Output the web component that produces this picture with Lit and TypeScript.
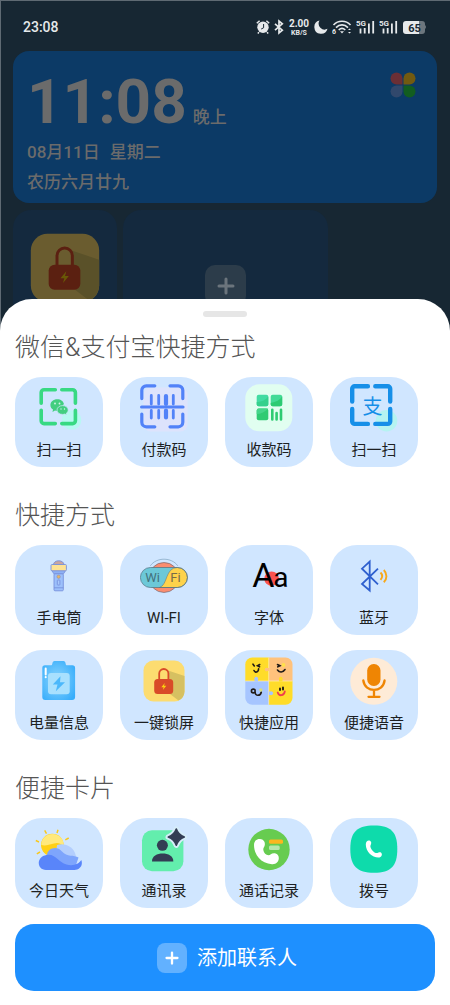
import { LitElement, html, svg, css, type SVGTemplateResult } from "lit";
import { customElement } from "lit/decorators.js";

const lock = svg`
  <rect x="3.5" y="3.5" width="41" height="41" rx="10" fill="#fcdc70"/>
  <path d="M28 13.5 44.5 19V34.5A10 10 0 0 1 38.5 43.5L30 37Z" fill="#d6c061"/>
  <path d="M19.2 23V16.6A4.6 4.6 0 0 1 28.4 16.6V23" fill="none" stroke="#d94b28" stroke-width="1.8"/>
  <rect x="14.2" y="22" width="19" height="15" rx="3.5" fill="#d94b28"/>
  <path d="M24.8 26 21.3 30.2H23.6L22.8 33 26.3 28.8H24Z" fill="#fbd20f"/>`;

const icons: Record<string, SVGTemplateResult> = {
  lock,
  wechat: svg`
    <circle cx="36.5" cy="36" r="9.8" fill="#b8f8f2"/>
    <g fill="none" stroke="#38d983" stroke-width="3.6" stroke-linecap="round">
      <path d="M20.3 5.8H9A2.8 2.8 0 0 0 6.2 8.6V19.2M26.8 5.8H37.6A2.8 2.8 0 0 1 40.4 8.6V19.2M20.3 39.6H9A2.8 2.8 0 0 1 6.2 36.8V26.2M26.8 39.6H37.6A2.8 2.8 0 0 0 40.4 36.8V26.2"/>
    </g>
    <path d="M22.3 15.2C18.3 15.2 15.4 17.8 15.4 21C15.4 23 16.4 24.6 18 25.6L17.5 28 20 26.6C21.4 27 22.6 26.9 23.6 26.7L28.9 20C28.5 17.3 25.8 15.2 22.3 15.2Z" fill="#43ce80"/>
    <path d="M27.6 21.6C24.4 21.6 22 23.5 22 26C22 28.6 24.4 30.4 27.6 30.4C28.4 30.4 29.2 30.3 29.9 30L31.8 31.1 31.4 29.2C32.6 28.4 33.2 27.3 33.2 26C33.2 23.5 30.7 21.6 27.6 21.6Z" fill="#43ce80" stroke="#d0e6ff" stroke-width=".7"/>
    <g fill="#d6f5ea"><circle cx="20" cy="19.5" r=".9"/><circle cx="24.5" cy="19.5" r=".9"/><circle cx="26" cy="25" r=".7"/><circle cx="29.5" cy="25" r=".7"/></g>`,
  paycode: svg`
    <rect x="3.5" y="3.5" width="44" height="44" rx="7" fill="#dde3fc"/>
    <g fill="none" stroke="#5282f8" stroke-width="3.2" stroke-linecap="round">
      <path d="M14.8 1.8H6.3A4.5 4.5 0 0 0 1.8 6.3V14.6M30 1.8H38.3A4.5 4.5 0 0 1 42.8 6.3V14.6M14.8 42.8H6.3A4.5 4.5 0 0 1 1.8 38.3V30M30 42.8H38.3A4.5 4.5 0 0 0 42.8 38.3V30M1.6 23H43"/>
      <path d="M11.3 11.5V20M18.7 11.5V20M33.3 11.5V20M11.3 26.5V34M18.7 26.5V34M33.3 26.5V34" stroke-width="2.8"/>
      <path d="M26 12V20M26 26.5V33.5" stroke-width="4.2"/>
    </g>`,
  receive: svg`
    <rect x=".3" y=".3" width="47" height="47" rx="14" fill="#e1fef0"/>
    <rect x="11.7" y="10.8" width="11.6" height="11.5" rx="2" fill="#42dba2"/>
    <path d="M11.7 18C17 18 21 15.5 23.3 12.5V20.3A2 2 0 0 1 21.3 22.3H13.7A2 2 0 0 1 11.7 20.3Z" fill="#35d08c"/>
    <rect x="25.7" y="10.8" width="11.5" height="11.5" rx="2" fill="#43da96"/>
    <path d="M25.7 19C31 18 35 16 37.2 12.5V20.3A2 2 0 0 1 35.2 22.3H27.7A2 2 0 0 1 25.7 20.3Z" fill="#2ccb72"/>
    <rect x="11.7" y="24.5" width="11.6" height="11.7" rx="2" fill="#2fcb72"/>
    <path d="M11.7 26.5A2 2 0 0 1 13.7 24.5H23.3C20 28 16 30 11.7 30Z" fill="#45d58a"/>
    <path d="M27.3 25.7V35.5M31.6 29V35.5M36 25.7V35.5" stroke="#2fcb72" stroke-width="2.6" stroke-linecap="round"/>`,
  alipay: svg`
    <circle cx="36.5" cy="36.7" r="10.8" fill="#b5f3f1"/>
    <g fill="none" stroke="#168fe8" stroke-width="4.4" stroke-linecap="round">
      <path d="M17.9 2.2H4.7A2.5 2.5 0 0 0 2.2 4.7V17.5M25.3 2.2H37.7A2.5 2.5 0 0 1 40.2 4.7V17.5M17.9 39.9H4.7A2.5 2.5 0 0 1 2.2 37.4V25M25.3 39.9H37.7A2.5 2.5 0 0 0 40.2 37.4V25"/>
    </g>
    <text x="22.5" y="29.5" class="glyph cjk" font-size="20" fill="#168fe8">支</text>`,
  torch: svg`
    <g stroke="#7791dc" stroke-width=".9" stroke-linejoin="round">
      <path d="M18.5 12.5A5 3.6 0 0 1 28.9 12.5Z" fill="#c9a5a0"/>
      <path d="M16.8 18.5H30.6L28.5 21.8H18.9Z" fill="#8db1f5"/>
      <rect x="19" y="21.8" width="9.3" height="17" rx="1" fill="#9cc0fb"/>
      <rect x="16" y="12.5" width="15.4" height="6.3" rx="1" fill="#fde294"/>
      <rect x="22.3" y="28" width="2.6" height="5" rx=".6" fill="#a9c9fd"/>
      <path d="M19 35.8H28.3"/>
    </g>
    <circle cx="23.6" cy="24.7" r="1.7" fill="#e6b768" stroke="#8a86a8" stroke-width=".5"/>`,
  wifi: svg`
    <path d="M10.3 13.8C16.5 5 31.5 5 37.8 13.8" fill="none" stroke="#7298b5" stroke-width=".6"/>
    <circle cx="24" cy="25.5" r="15" fill="#fa8d70" stroke="#665d68" stroke-width=".6"/>
    <rect x=".4" y="15.5" width="47" height="20" rx="10" fill="#6cc8d8"/>
    <path d="M37.5 15.5A10 10 0 0 1 37.5 35.5H19.5C28 33 25 15.5 37.5 15.5Z" fill="#fed24b" stroke="#5e6c77" stroke-width=".5"/>
    <rect x=".4" y="15.5" width="47" height="20" rx="10" fill="none" stroke="#51707e" stroke-width=".7"/>
    <text x="12.5" y="30" class="glyph" font-size="13" fill="#43727d">Wi</text>
    <text x="35.5" y="30" class="glyph" font-size="13" fill="#776b49">Fi</text>`,
  font: svg`
    <circle cx="26.6" cy="26.7" r="7.3" fill="#fb5350"/>
    <text x="18.3" y="34.5" class="glyph" font-size="34">A</text>
    <text x="35.8" y="34.5" class="glyph" font-size="28">a</text>`,
  bluetooth: svg`
    <path d="M28 16.7 12 32 19.7 38.5V9.5L12 16.7 28 32.3" fill="none" stroke="#2f60cf" stroke-width="1.8"/>
    <path d="M30.5 20.5C32.5 22.5 32.5 25.5 30.5 27.8M33.8 18C37.3 21.5 37.3 27 33.8 30.3" fill="none" stroke="#f7a81b" stroke-width="1.9"/>`,
  battery: svg`
    <defs><radialGradient id="cell" cx=".45" cy=".5" r=".65"><stop offset="0" stop-color="#8ed6fd"/><stop offset="1" stop-color="#37adfb"/></radialGradient></defs>
    <path d="M10 8.3H16.5C17.5 8.3 17 4 19.5 4H28.5C31 4 30.5 8.3 31.5 8.3H37.3A2.8 2.8 0 0 1 40.1 11.1V40A3 3 0 0 1 37.1 43H10.3A3 3 0 0 1 7.3 40V11A2.7 2.7 0 0 1 10 8.3Z" fill="url(#cell)"/>
    <rect x="13" y="16" width="21.7" height="21.3" rx="3" fill="#a8e0fe"/>
    <path d="M25.5 19.3 17.8 27.5H22.5L20.8 34.3 30 25.3H25Z" fill="#4bb8fb"/>
    <path d="M10.7 11.5V17.5M10.7 20V20.3" stroke="#fff" stroke-width="2" stroke-linecap="round"/>`,
  puzzle: svg`
    <clipPath id="board"><rect x=".3" y=".5" width="47.2" height="47.2" rx="7"/></clipPath>
    <g clip-path="url(#board)">
      <path d="M0 0H24V24H0ZM24 24H48V48H24Z" fill="#ffdc29"/>
      <path d="M24 0H48V24H24Z" fill="#ffc27c"/>
      <path d="M0 24H24V48H0Z" fill="#a6c5ff"/>
      <path d="M0 24H48M23.7 0V48" stroke="#fdeebc" stroke-width=".7"/>
      <path d="M24 11H22.5A1.8 1.8 0 1 0 22.5 14H24Z" fill="#ffc27c"/>
      <path d="M9.5 24.5V22.5A1.9 1.9 0 1 1 13 22.5V24.5Z" fill="#a6c5ff"/>
      <path d="M24 34.5H25.5A1.9 1.9 0 1 1 25.5 38H24Z" fill="#a6c5ff"/>
      <path d="M34 24.5V22.5A1.9 1.9 0 1 1 37.5 22.5V24.5Z" fill="#ffdc29"/>
    </g>
    <g fill="none" stroke="#211b17" stroke-width="1.6" stroke-linecap="round">
      <path d="M8 7.2 9.3 9M14.7 7.5 12.5 8.7 14.5 9.8M9 13.5C10 16 13.5 15.5 13.6 11.8"/>
      <path d="M32.5 7.5 35 8.8 32.8 9.8M32.5 13C34.5 15.8 38 15.5 40 12.5"/>
      <circle cx="8.3" cy="34" r="1.9"/><path d="M10.2 35.5C10 39 15.5 39.5 16.3 35"/>
      <path d="M35 31.5V33M38 30.5V32.5" stroke-width="1.9"/>
    </g>
    <circle cx="38.5" cy="8" r="1.9" fill="#ffe14a"/><circle cx="15.8" cy="33" r="1.7" fill="#d6dc86"/>
    <path d="M32.7 35.5C34 39.5 39 39 39.8 34.5" fill="none" stroke="#ef3f4d" stroke-width="1.8" stroke-linecap="round"/>`,
  mic: svg`
    <circle cx="23.8" cy="24.3" r="23.5" fill="#feebd7"/>
    <rect x="17.2" y="7" width="13.3" height="22" rx="6.5" fill="#ef8503"/>
    <path d="M13.3 23.5C15 36 33 36 34.6 23.5M24 33V39.5M18.5 39.8H29.5" fill="none" stroke="#ef8503" stroke-width="2.3" stroke-linecap="round"/>`,
  weather: svg`
    <path d="M9.7 5.3 11.5 8.7M23 4.8 22 8M33.7 13 30.3 14.8M.8 15.5 4 17M1.8 28.8 5 27" stroke="#f8c81e" stroke-width="1.5"/>
    <circle cx="17.3" cy="20" r="11.3" fill="#ffd016"/>
    <path d="M6.3 20C6 12 15 6.5 22.5 10.2C28 12.5 29 17.5 28.5 21C21 13.5 15 22.5 6.3 20Z" fill="#ffe97c"/>
    <path d="M22 20C30 17.5 39 22 40.8 30.5L41 37H20Z" fill="#b3cefd"/>
    <path d="M12 29.8C12.5 23 22 20 27 26.5C32 32.5 39 29.5 43.5 32.5L40 43H15Z" fill="#7ea5fc"/>
    <path d="M11.5 30C20 28 23 37 31.5 39.5C38 41.5 44 39 46.3 35C48.5 41 44 45 39.5 45H11C1.5 45 1 31.5 11.5 30Z" fill="#5985fa"/>`,
  contacts: svg`
    <rect x="2" y="5.2" width="41.4" height="41" rx="10" fill="#63eead"/>
    <g stroke-linejoin="round">
      <path id="star" d="M36.3 4C37.8 8.3 40 10.5 44.3 12C40 13.7 37.8 15.8 36.3 20.2C34.8 15.8 32.6 13.7 28.3 12C32.6 10.5 34.8 8.3 36.3 4Z" fill="#d6edf9" stroke="#d6edf9" stroke-width="5.5"/>
      <path d="M36.3 4C37.8 8.3 40 10.5 44.3 12C40 13.7 37.8 15.8 36.3 20.2C34.8 15.8 32.6 13.7 28.3 12C32.6 10.5 34.8 8.3 36.3 4Z" fill="#333d54" stroke="#333d54" stroke-width="1.6"/>
    </g>
    <circle cx="22.4" cy="20.3" r="5.5" fill="#333d54"/>
    <path d="M12 36.4C11.5 26 33.8 26 33.3 36.4Z" fill="#333d54"/>`,
  calls: svg`
    <circle cx="24" cy="24.5" r="20.7" fill="#67cc50"/>
    <path d="M9 20C9 16 11.5 13.8 15 14C18.5 14.2 20.3 17 19.8 20C19.4 22.5 18 22.8 18.3 25C18.7 28 21 30 23.5 30.3C25.3 30.4 26 28.3 29 28.3C32 28.3 34 30.5 33.8 33.5C33.5 37 31 39.5 27 39.2C16 38.5 9 30 9 20Z" fill="#fff"/>
    <rect x="24" y="14.4" width="14" height="4.3" rx="1.5" fill="#fcb71e"/>
    <rect x="24" y="20.5" width="10.7" height="4.5" rx="1.5" fill="#b7e7aa"/>`,
  dial: svg`
    <path d="M24 .5C41 .5 47.3 7 47.3 24S41 47.8 24 47.8S.3 41 .3 24S7 .5 24 .5Z" fill="#0edbab"/>
    <path d="M15.8 19.5C15.8 16.5 18 14.8 20 15.8C21.8 16.9 21.4 18.8 20.5 20.4C19.6 22.5 23.5 27.5 26 28C27.8 28.2 29.5 26.5 31.2 27.7C32.8 29.3 31.5 32.5 28.5 32.5C22 32.5 15.8 26.5 15.8 19.5Z" fill="#fff"/>`,
};

const icon = (name: string) =>
  html`<svg class="icon" viewBox="0 0 48 48" aria-hidden="true">${icons[name]}</svg>`;

interface Section {
  title: string;
  items: [string, string][];
}

const sections: Section[] = [
  {
    title: "微信&支付宝快捷方式",
    items: [["wechat", "扫一扫"], ["paycode", "付款码"], ["receive", "收款码"], ["alipay", "扫一扫"]],
  },
  {
    title: "快捷方式",
    items: [
      ["torch", "手电筒"], ["wifi", "WI-FI"], ["font", "字体"], ["bluetooth", "蓝牙"],
      ["battery", "电量信息"], ["lock", "一键锁屏"], ["puzzle", "快捷应用"], ["mic", "便捷语音"],
    ],
  },
  {
    title: "便捷卡片",
    items: [["weather", "今日天气"], ["contacts", "通讯录"], ["calls", "通话记录"], ["dial", "拨号"]],
  },
];

@customElement("status-bar")
class StatusBar extends LitElement {
  static styles = css`
    :host {
      display: flex;
      align-items: center;
      justify-content: space-between;
      height: 50px;
      padding: 2px 23px 0 22px;
      box-sizing: border-box;
      color: #e6e9eb;
      font-family: Roboto, "Noto Sans CJK SC", sans-serif;
    }
    .time { font-size: 14px; font-weight: 500; line-height: 20px; }
    .tray { display: flex; align-items: center; gap: 4px; }
    svg { display: block; height: 16px; }
    text { font-family: Roboto, sans-serif; font-weight: 700; fill: currentColor; }
    .level { fill: #172733; }
  `;

  private signal() {
    return html`<svg width="19" viewBox="0 0 19 16" aria-hidden="true">
      <text x="0" y="7" font-size="8">5G</text>
      <path d="M4.5 9.5V14.5M8.7 9V14.5M12.9 4.5V14.5M17.2 2V14.5" stroke="currentColor" stroke-width="1.8"/>
    </svg>`;
  }

  render() {
    return html`
      <span class="time">23:08</span>
      <div class="tray">
        <svg width="14" viewBox="0 0 14 16" aria-hidden="true">
          <circle cx="7" cy="8.2" r="5.7" fill="currentColor"/>
          <path d="M.8 4.3 3.6 1.8M13.2 4.3 10.4 1.8M3 13.2 1.8 14.6M11 13.2 12.2 14.6" stroke="currentColor" stroke-width="1.5"/>
          <path d="M7.6 5V8.8L5.2 10" fill="none" stroke="#172733" stroke-width="1"/>
        </svg>
        <svg width="10" viewBox="0 0 10 16" aria-hidden="true">
          <path d="M1 4.8 8.3 11.2 5 14V2L8.3 4.8 1 11.2" fill="none" stroke="currentColor" stroke-width="1.7"/>
        </svg>
        <svg width="22" viewBox="0 0 22 16" aria-hidden="true">
          <text x="11" y="8" font-size="10" text-anchor="middle">2.00</text>
          <text x="11" y="15.500" font-size="7" text-anchor="middle">KB/S</text>
        </svg>
        <svg width="14" viewBox="0 0 14 16" aria-hidden="true">
          <path d="M5.5 1.5A6.7 6.7 0 1 0 13.5 9.8A6 6 0 0 1 5.5 1.5Z" fill="currentColor"/>
        </svg>
        <svg width="20" viewBox="0 0 20 16" aria-hidden="true">
          <g fill="none" stroke="currentColor" stroke-width="1.6">
            <path d="M1.5 6C6 1 14 1 18.5 6M4 8.6C7.5 5 12.5 5 16 8.6M6.7 11C8.8 9 11.2 9 13.3 11"/>
          </g>
          <path d="M8 12.2H12L10 14.5Z" fill="currentColor"/>
          <text x="0" y="15" font-size="7">6</text>
          <path d="M16 11 17.5 9.5 19 11ZM16 13 17.5 14.5 19 13Z" fill="currentColor"/>
        </svg>
        ${this.signal()} ${this.signal()}
        <svg width="25" viewBox="0 0 25 16" aria-hidden="true">
          <path d="M4 2H20A3 3 0 0 1 23 5V6Q25 8 23 10V12A3 3 0 0 1 20 15H4Z" fill="#6c767e"/>
          <path d="M4 2H17V15H4A3 3 0 0 1 1 12V5A3 3 0 0 1 4 2Z" fill="currentColor"/>
          <text class="level" x="12.5" y="12.5" font-size="11" text-anchor="middle">65</text>
        </svg>
      </div>
    `;
  }
}

@customElement("app-root")
class AppRoot extends LitElement {
  static styles = css`
    :host {
      display: block;
      min-height: 100vh;
      background: #fff;
      font-family: Roboto, "Noto Sans CJK SC", sans-serif;
    }
    * { box-sizing: border-box; }
    button { font: inherit; border: 0; padding: 0; cursor: pointer; }
    .home {
      border: solid #5f6a73;
      border-width: 1px 0 0 1px;
      background: #172733;
      color: #6b6b6b;
    }
    .widgets {
      display: grid;
      grid-template-columns: 104px 205px 1fr;
      gap: 7px 6px;
      padding: 0 13px 0 12px;
    }
    .clock {
      grid-column: 1 / -1;
      display: flex;
      justify-content: space-between;
      align-items: flex-start;
      height: 152px;
      padding: 19px 20px 0 14px;
      border-radius: 16px;
      background: #0c3a66;
      font-size: 17px;
      font-weight: 500;
      line-height: 30px;
    }
    .now { display: flex; align-items: baseline; gap: 6px; margin-bottom: 3px; }
    .digits { font-size: 62px; font-weight: 700; line-height: 64px; }
    .date { display: flex; gap: 10px; }
    .clock p { margin: 0; }
    .clover { width: 28px; height: 28px; margin-top: 1px; }
    .card {
      display: flex;
      justify-content: center;
      height: 140px;
      border-radius: 18px;
      background: #14293e;
    }
    .locker { width: 80px; height: 80px; margin-top: 18px; filter: brightness(0.42); }
    .slot {
      display: grid;
      place-items: center;
      width: 41px;
      height: 41px;
      margin-top: 55px;
      border-radius: 10px;
      background: #2c3c4a;
      color: #6b747c;
    }
    .plus { width: 18px; height: 18px; stroke: currentColor; stroke-linecap: round; stroke-width: 3; }
    .sheet {
      position: relative;
      margin-top: -51px;
      padding: 12px 15px 15px;
      border-radius: 32px 32px 0 0;
      background: #fff;
    }
    .handle { width: 44px; height: 6px; margin: 0 auto 13px; border-radius: 3px; background: #e6e6e6; }
    h2 {
      margin: 0 0 11px;
      color: #555;
      font-size: 25px;
      font-weight: 300;
      line-height: 36px;
    }
    .grid { display: grid; grid-template-columns: repeat(4, 1fr); row-gap: 15px; margin-bottom: 31px; }
    .grid:last-of-type { margin-bottom: 16px; }
    .tile {
      display: flex;
      flex-direction: column;
      align-items: center;
      gap: 7px;
      height: 90px;
      margin-right: 17px;
      padding-top: 7px;
      border-radius: 27px;
      background: #d0e6ff;
      color: #1d1f22;
      font-size: 15px;
      line-height: 22px;
    }
    .icon { display: block; width: 48px; height: 48px; }
    .glyph { text-anchor: middle; font-family: Roboto, sans-serif; }
    .cjk { font-family: "Noto Sans CJK SC", sans-serif; }
    .add {
      display: flex;
      align-items: center;
      justify-content: center;
      gap: 10px;
      width: 100%;
      height: 67px;
      padding-left: 4px;
      border-radius: 19px;
      background: #1e90ff;
      color: #fff;
      font-size: 20px;
      line-height: 30px;
    }
    .badge {
      display: grid;
      place-items: center;
      width: 30px;
      height: 30px;
      border-radius: 8px;
      background: #62b1ff;
    }
    .badge .plus { width: 14px; height: 14px; }
  `;

  private plus() {
    return html`<svg class="plus" viewBox="0 0 18 18" aria-hidden="true"><path d="M9 2V16M2 9H16"/></svg>`;
  }

  render() {
    return html`
      <div class="home">
        <status-bar></status-bar>
        <div class="widgets">
          <div class="clock">
            <div>
              <div class="now"><span class="digits">11:08</span><span>晚上</span></div>
              <p class="date"><span>08月11日</span><span>星期二</span></p>
              <p>农历六月廿九</p>
            </div>
            <svg class="clover" viewBox="0 0 28 28" aria-hidden="true">
              <path d="M13.5 13.5H7.5A6 6 0 1 1 13.5 7.5Z" fill="#6b2f35"/>
              <path d="M14.5 13.5V7.5A6 6 0 1 1 20.5 13.5Z" fill="#725a10"/>
              <path d="M13.5 14.5V20.5A6 6 0 1 1 7.5 14.5Z" fill="#31486c"/>
              <path d="M14.5 14.5H20.5A6 6 0 1 1 14.5 20.5Z" fill="#125d20"/>
            </svg>
          </div>
          <div class="card">
            <svg class="locker" viewBox="0 0 48 48" aria-hidden="true">${lock}</svg>
          </div>
          <div class="card"><span class="slot">${this.plus()}</span></div>
        </div>
      </div>
      <main class="sheet">
        <div class="handle"></div>
        ${sections.map(
          (s) => html`
            <h2>${s.title}</h2>
            <div class="grid">
              ${s.items.map(([name, label]) => html`<button class="tile">${icon(name)}<span>${label}</span></button>`)}
            </div>
          `
        )}
        <button class="add"><span class="badge">${this.plus()}</span><span>添加联系人</span></button>
      </main>
    `;
  }
}
